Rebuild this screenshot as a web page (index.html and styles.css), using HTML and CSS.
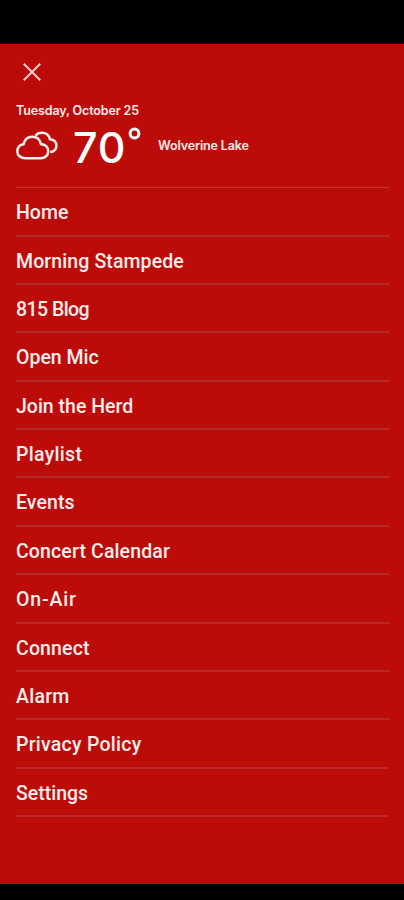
FILE: index.html
```
<!DOCTYPE html>
<html lang="en">
<head>
<meta charset="utf-8">
<meta name="viewport" content="width=device-width, initial-scale=1">
<title>Menu</title>
<link rel="stylesheet" href="styles.css">
</head>
<body>
<main class="drawer">
  <button class="close" aria-label="Close menu">
    <svg width="18" height="18" viewBox="0 0 18 18"><path d="M.7.7 17.3 17.3M17.3.7.7 17.3"/></svg>
  </button>
  <div class="date"><span>Tuesday, October 25</span></div>
  <section class="weather">
    <svg class="cloud" width="43" height="30" viewBox="0 0 43 30"><path d="M9.5 27.3C4.5 27.3 1.3 24.2 1.3 20.2c0-3.8 2.8-6.6 6.3-7C8.6 8.7 11.9 5.7 16.2 5.7c4.5 0 7.8 3 8.7 7.4 4.4.1 7.3 3.2 7.3 7.1 0 4.1-3.1 7.1-7.5 7.1Z"/><path d="M19.5 4.6C21 2.7 23.3 1.7 25.8 1.7c4.3 0 7.3 2.7 8.1 6.5 4.1.2 6.5 2.9 6.5 6.5 0 3.5-2.7 6.1-6.1 6.4"/></svg>
    <span class="temp">70</span>
    <svg class="degree" width="13" height="13" viewBox="0 0 13 13"><circle cx="6.5" cy="6.5" r="4.4"/></svg>
    <span class="place">Wolverine Lake</span>
  </section>
  <nav class="menu">
    <a class="home"><span>Home</span></a>
    <a class="stampede"><span>Morning Stampede</span></a>
    <a class="blog"><span>815 Blog</span></a>
    <a class="mic"><span>Open Mic</span></a>
    <a class="herd"><span>Join the Herd</span></a>
    <a class="playlist"><span>Playlist</span></a>
    <a class="events"><span>Events</span></a>
    <a class="calendar"><span>Concert Calendar</span></a>
    <a class="onair"><span>On-Air</span></a>
    <a class="connect"><span>Connect</span></a>
    <a class="alarm"><span>Alarm</span></a>
    <a class="privacy"><span>Privacy Policy</span></a>
    <a class="settings"><span>Settings</span></a>
  </nav>
</main>
</body>
</html>
```
FILE: styles.css
```
* { box-sizing: border-box; }
body {
  margin: 0;
  height: 900px;
  padding: 44px 0 16px;
  background: #000;
  color: #ffecea;
  font-family: Roboto, "Open Sans", sans-serif;
  overflow: hidden;
}
.drawer { height: 840px; padding: 0 15px 0 16px; background: #bc0c0a; }
.close {
  display: flex;
  width: 32px;
  height: 56px;
  padding: 0 0 0 7px;
  border: 0;
  background: none;
  align-items: center;
}
svg { display: block; flex: none; fill: none; stroke: #ffecea; }
.close svg { stroke-width: 2; stroke: #f8cfcc; }
.date { height: 22px; font: 600 12.5px/22px Inter, sans-serif; letter-spacing: -0.13px; }
.weather { display: flex; height: 64.6px; }
.cloud { margin-top: 9px; stroke-width: 2.6; stroke-linejoin: round; }
.temp { width: 53px; margin-left: 14px; color: #fff; font: 500 43px/50px Inter, sans-serif; letter-spacing: 0.9px; white-space: nowrap; }
.degree { margin-top: 5px; margin-left: 2px; stroke: #fff; stroke-width: 3; }
.place { margin: 14px 0 0 17px; font: 600 12.5px/20px Inter, sans-serif; letter-spacing: -0.13px; white-space: nowrap; }
.menu { padding-top: 0.6px; border-top: 1px solid #b83b38; }
.menu a {
  display: flex;
  height: 48.38px;
  padding-top: 3.6px;
  border-bottom: 2px solid #b62b29;
  align-items: center;
  font-size: 19.5px;
  line-height: 24px;
  font-weight: 500;
  white-space: nowrap;
}
.menu .stampede { letter-spacing: 0.1px; }
.menu .blog { letter-spacing: -0.55px; }
.menu .playlist { letter-spacing: 0.3px; }
.menu .events { letter-spacing: 0.1px; }
.menu .calendar { letter-spacing: 0.13px; }
.menu .onair { letter-spacing: 0.85px; }
.menu .connect { letter-spacing: 0.15px; }
.menu .alarm { letter-spacing: 0.25px; }
.menu .privacy { letter-spacing: 0.25px; }
```
